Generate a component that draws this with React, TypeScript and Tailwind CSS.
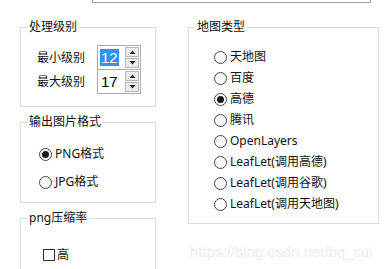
import React from 'react';

const font = "font-['Noto_Sans','Noto_Sans_CJK_SC',sans-serif]";

function Spin({ value, selected }: { value: string; selected?: boolean }) {
  return (
    <div className="flex h-[25px] w-[44px] items-center border border-[#adadad] bg-white pl-[2px] pr-[1px]">
      <span
        className={`flex-1 font-['Liberation_Sans',sans-serif] text-[15px] leading-[17px] ${
          selected ? '' : ''
        }`}
      >
        <span className={selected ? 'bg-[#3390ff] px-[1px] text-white' : 'px-[1px] text-black'}>{value}</span>
      </span>
      <div className="flex flex-col gap-[1px]">
        <SpinBtn up />
        <SpinBtn />
      </div>
    </div>
  );
}

function SpinBtn({ up }: { up?: boolean }) {
  return (
    <div className="flex h-[10px] w-[14px] items-center justify-center border border-[#b8b8b8] bg-[#ececec]">
      <svg width="7" height="4" viewBox="0 0 7 4">
        {up ? <path d="M0.5 4 L3.5 0.5 L6.5 4 Z" fill="#222" /> : <path d="M0.5 0 L3.5 3.5 L6.5 0 Z" fill="#222" />}
      </svg>
    </div>
  );
}

function Radio({ label, checked }: { label: string; checked?: boolean }) {
  return (
    <div className="flex items-center gap-[3px]">
      <span className="flex h-[13px] w-[13px] items-center justify-center rounded-full border border-[#444] bg-white">
        {checked && <span className="h-[7px] w-[7px] rounded-full bg-[#1a1a1a]" />}
      </span>
      <span className="text-[12px] leading-[16px] text-[#111]">{label}</span>
    </div>
  );
}

function Group({ title, className, children }: { title: string; className?: string; children: React.ReactNode }) {
  return (
    <fieldset className={`min-w-0 border border-[#dcdcdc] ${className ?? ''}`}>
      <legend className="ml-[6px] px-[2px] text-[12px] leading-[16px] text-[#111]">{title}</legend>
      {children}
    </fieldset>
  );
}

export default function App() {
  return (
    <div className={`h-[269px] w-[391px] overflow-hidden bg-white ${font}`}>
      {/* top text box, mostly scrolled off */}
      <div className="ml-[92px] h-[3px] w-[279px] border-x border-b border-[#9e9e9e]" />

      <div className="mt-[16px] flex">
        {/* left column */}
        <div className="ml-[20px] flex w-[136px] flex-col gap-[7px]">
          <Group title="处理级别" className="h-[88px]">
            <div className="flex flex-col pl-[16px] pt-[10px]">
              <div className="flex items-center">
                <span className="w-[60px] text-[12px] leading-[16px] text-[#111]">最小级别</span>
                <Spin value="12" selected />
              </div>
              <div className="-mt-[1px] flex items-center">
                <span className="w-[60px] text-[12px] leading-[16px] text-[#111]">最大级别</span>
                <Spin value="17" />
              </div>
            </div>
          </Group>

          <Group title="输出图片格式" className="h-[89px]">
            <div className="flex flex-col gap-[12px] pl-[18px] pt-[16px]">
              <Radio label="PNG格式" checked />
              <Radio label="JPG格式" />
            </div>
          </Group>

          <Group title="png压缩率" className="h-[80px]">
            <div className="flex items-center gap-[2px] pl-[22px] pt-[21px]">
              <span className="h-[12px] w-[12px] border border-[#333] bg-white" />
              <span className="text-[12px] leading-[16px] text-[#111]">高</span>
            </div>
          </Group>
        </div>

        {/* right column */}
        <div className="ml-[32px] flex w-[191px] flex-col">
          <Group title="地图类型" className="h-[205px]">
            <div className="flex flex-col gap-[5px] pl-[25px] pt-[14px]">
              <Radio label="天地图" />
              <Radio label="百度" />
              <Radio label="高德" checked />
              <Radio label="腾讯" />
              <Radio label="OpenLayers" />
              <Radio label="LeafLet(调用高德)" />
              <Radio label="LeafLet(调用谷歌)" />
              <Radio label="LeafLet(调用天地图)" />
            </div>
          </Group>
          <div className="mt-[19px] pl-[2px] font-['Liberation_Sans',sans-serif] text-[15px] leading-[18px] text-[#ececec]">
            https://blog.csdn.net/bq_cui
          </div>
        </div>
      </div>
    </div>
  );
}
